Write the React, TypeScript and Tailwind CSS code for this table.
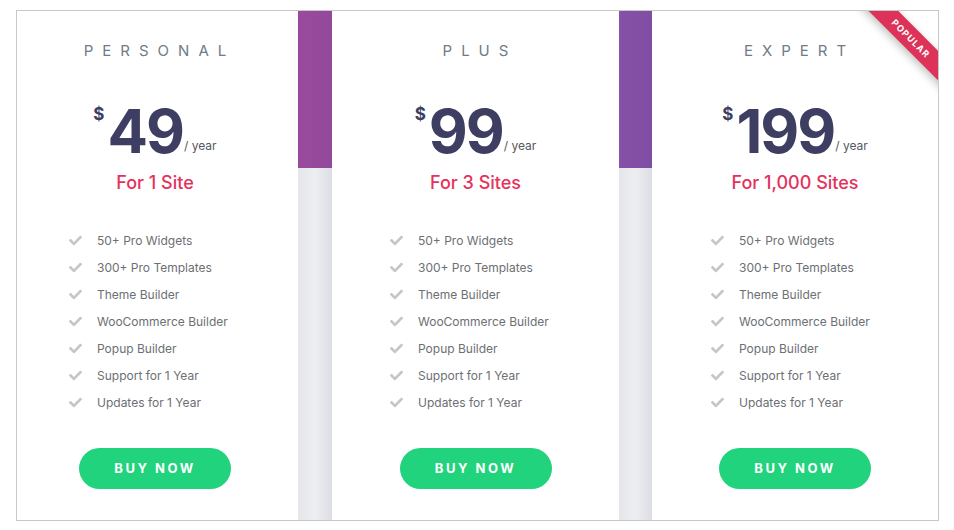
import { FaCheck } from "react-icons/fa";

const features = [
  "50+ Pro Widgets",
  "300+ Pro Templates",
  "Theme Builder",
  "WooCommerce Builder",
  "Popup Builder",
  "Support for 1 Year",
  "Updates for 1 Year",
];

type Plan = {
  name: string;
  price: string;
  sites: string;
  width: string;
  shift: string;
  listPad: string;
  popular?: boolean;
};

const plans: Plan[] = [
  { name: "Personal", price: "49", sites: "For 1 Site", width: "w-[281px]", shift: "pr-[5px]", listPad: "pl-[52px]" },
  { name: "Plus", price: "99", sites: "For 3 Sites", width: "w-[287px]", shift: "", listPad: "pl-[58px]" },
  { name: "Expert", price: "199", sites: "For 1,000 Sites", width: "w-[286px]", shift: "", listPad: "pl-[59px]", popular: true },
];

function PlanCard({ plan }: { plan: Plan }) {
  return (
    <div className={`relative flex flex-col bg-white ${plan.width}`}>
      {plan.popular && (
        <div className="absolute top-0 right-0 w-[90px] h-[90px] overflow-hidden">
          <div className="absolute left-[-2px] top-[17px] w-[130px] h-[21px] rotate-45 bg-[#dd3358] text-white text-[9px] font-bold tracking-[1px] flex items-center justify-center shadow-[0_3px_8px_rgba(0,0,0,0.25)]">
            POPULAR
          </div>
        </div>
      )}
      <div className={`flex flex-col items-center pt-[31px] ${plan.shift}`}>
        <div className="text-[15px] leading-[18px] uppercase tracking-[9px] mr-[-9px] text-[#6f7b86]">
          {plan.name}
        </div>
        <div className="flex items-baseline mt-[41px] text-[#3e3e62]">
          <span className="self-start text-[17px] leading-none font-bold mt-[5px] mr-[3px]">$</span>
          <span className="text-[60px] leading-none font-bold tracking-[-2px]">{plan.price}</span>
          <span className="text-[12px] leading-none text-[#54595f] ml-[1px] -translate-y-[3px]">/ year</span>
        </div>
        <div className="mt-[11px] text-[18px] leading-[22px] font-medium text-[#e5325d]">{plan.sites}</div>
      </div>
      <ul className={`mt-[33px] flex flex-col ${plan.listPad}`}>
        {features.map((f) => (
          <li key={f} className="flex items-center h-[27px] text-[12px] text-[#6d6f73]">
            <FaCheck className="text-[#c6c6c6] w-[13px] h-[13px] mr-[15px]" />
            {f}
          </li>
        ))}
      </ul>
      <div className={`flex justify-center mt-[32px] ${plan.shift}`}>
        <button className="w-[152px] h-[41px] rounded-full bg-[#21d37c] text-white text-[13px] font-bold tracking-[2.5px] uppercase">
          Buy Now
        </button>
      </div>
    </div>
  );
}

function Divider({ purple, width }: { purple: string; width: string }) {
  return (
    <div className={`flex flex-col ${width}`}>
      <div className={`h-[157px] ${purple}`} />
      <div className="flex-1 bg-linear-to-r from-[#e4e6ea] via-[#eceef2] to-[#dcdee3]" />
    </div>
  );
}

export default function App() {
  return (
    <div className="min-h-screen bg-white pl-[16px] pt-[10px] font-['Inter','Liberation_Sans',sans-serif]">
      <div className="flex w-[923px] h-[511px] border border-[#c8c8c8]">
        <PlanCard plan={plans[0]} />
        <Divider purple="bg-linear-to-r from-[#9a4a9c] to-[#93499a]" width="w-[34px]" />
        <PlanCard plan={plans[1]} />
        <Divider purple="bg-linear-to-r from-[#8651a8] to-[#7f4ea3]" width="w-[33px]" />
        <PlanCard plan={plans[2]} />
      </div>
    </div>
  );
}
